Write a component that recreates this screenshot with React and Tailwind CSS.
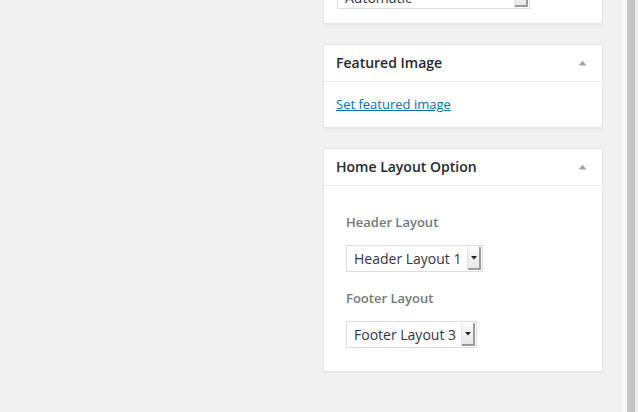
import React from "react";

const font = { fontFamily: '"Open Sans", "Noto Sans", sans-serif' };

function Toggle() {
  return (
    <svg width="9" height="6" viewBox="0 0 9 6" className="block">
      <path d="M0.5 5.5 L4.5 0.8 L8.5 5.5 Z" fill="#a0a5aa" />
    </svg>
  );
}

function ArrowBtn() {
  return (
    <div className="flex h-full w-[14px] items-center justify-center border-l border-[#e2e2e2] bg-gradient-to-b from-[#fbfbfb] to-[#e6e6e6] shadow-[inset_-2px_-2px_0_#9a9a9a]">
      <svg width="6" height="4" viewBox="0 0 6 4" className="block -mt-[1px] -ml-[1px]">
        <path d="M0 0 L6 0 L3 3.5 Z" fill="#222" />
      </svg>
    </div>
  );
}

function Select({ label, w }) {
  return (
    <div className={`flex h-[27px] items-stretch border border-[#dddddd] bg-white ${w}`}>
      <div className="flex flex-1 items-center pl-[7px] text-[14px] leading-none text-[#32373c] whitespace-nowrap">
        {label}
      </div>
      <div className="py-[1px] pr-[1px]">
        <ArrowBtn />
      </div>
    </div>
  );
}

function Box({ title, children }) {
  return (
    <div className="border border-[#e5e5e5] bg-white shadow-[0_1px_1px_rgba(0,0,0,0.04)]">
      <div className="flex h-[37px] items-center justify-between border-b border-[#eeeeee] pl-[12px] pr-[15px]">
        <h2 className="text-[14px] font-semibold leading-none text-[#23282d]">{title}</h2>
        <Toggle />
      </div>
      {children}
    </div>
  );
}

export default function App() {
  return (
    <div className="flex h-[412px] w-[638px] overflow-hidden bg-[#f1f1f1]" style={font}>
      <div className="w-[323px] shrink-0" />
      <div className="flex w-[280px] shrink-0 flex-col gap-[20px] -mt-[50px]">
        <div className="border border-[#e5e5e5] bg-white pb-[14px] pt-[30px] pl-[13px] shadow-[0_1px_1px_rgba(0,0,0,0.04)]">
          <div className="flex h-[28px] w-[193px] items-stretch border border-[#dddddd] bg-white">
            <div className="flex flex-1 items-center pl-[7px] pt-[6px] text-[14px] leading-none text-[#32373c]">
              Automatic
            </div>
            <div className="py-[1px] pr-[1px]">
              <ArrowBtn />
            </div>
          </div>
        </div>

        <Box title="Featured Image">
          <div className="px-[12px] pt-[12px] pb-[13px] text-[13px] leading-[20px]">
            <a href="#" className="block w-fit text-[13px] leading-[20px] text-[#0073aa] underline">
              Set featured image
            </a>
          </div>
        </Box>

        <Box title="Home Layout Option">
          <div className="flex flex-col pl-[22px] pt-[26px] pb-[23px]">
            <div className="text-[13px] font-semibold leading-[20px] text-[#72777c]">Header Layout</div>
            <div className="mt-[13px]">
              <Select label="Header Layout 1" w="w-[137px]" />
            </div>
            <div className="mt-[16px] text-[13px] font-semibold leading-[20px] text-[#72777c]">Footer Layout</div>
            <div className="mt-[13px]">
              <Select label="Footer Layout 3" w="w-[131px]" />
            </div>
          </div>
        </Box>
      </div>
      <div className="w-[20px] shrink-0" />
      <div className="flex w-[15px] shrink-0">
        <div className="w-[4px] bg-[#f8f8f8]" />
        <div className="w-[8px] bg-[#c4c4c4]" />
        <div className="w-[3px] bg-[#ebebeb]" />
      </div>
    </div>
  );
}
